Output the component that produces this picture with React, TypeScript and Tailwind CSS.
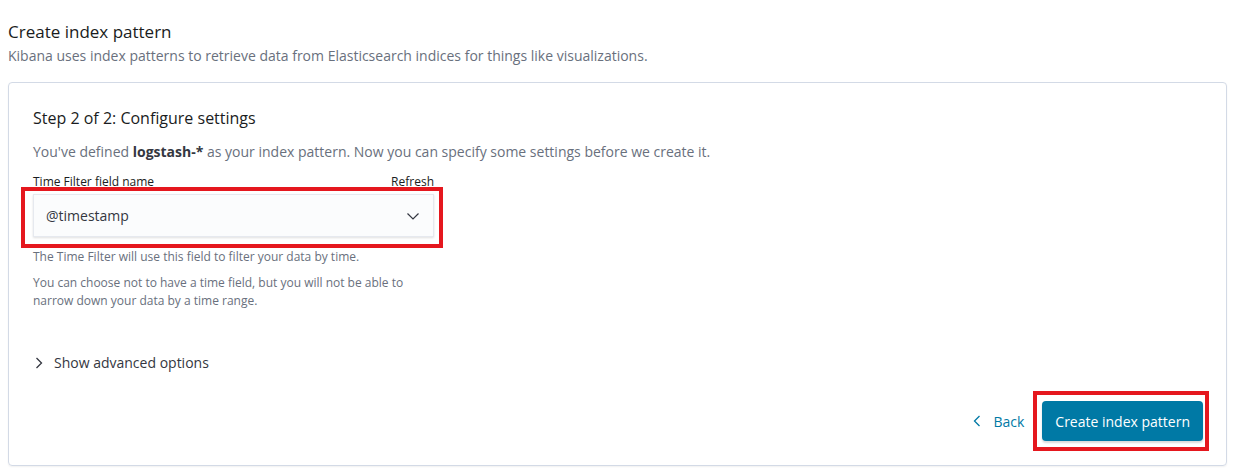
const ChevronDown = () => (
  <svg width="16" height="16" viewBox="0 0 16 16" fill="none" stroke="#343741" strokeWidth="1.2">
    <path d="M2.5 5.5 8 11l5.5-5.5" />
  </svg>
);

const ChevronRight = ({ color = "#343741" }: { color?: string }) => (
  <svg width="12" height="14" viewBox="0 0 12 14" fill="none" stroke={color} strokeWidth="1.3">
    <path d="M3.5 2 8.5 7l-5 5" />
  </svg>
);

const ChevronLeft = () => (
  <svg width="12" height="14" viewBox="0 0 12 14" fill="none" stroke="#0079a5" strokeWidth="1.3">
    <path d="M8.5 2 3.5 7l5 5" />
  </svg>
);

const App = () => {
  return (
    <div
      className="w-[1234px] h-[472px] bg-white overflow-hidden px-2 pt-[20px] text-[#343741]"
      style={{ fontFamily: "'Open Sans', 'Liberation Sans', sans-serif" }}
    >
      {/* header */}
      <h1 className="text-[17px] leading-[24px] text-[#1a1c21]">Create index pattern</h1>
      <p className="text-[14px] leading-[20px] text-[#69707d] mt-[2px]">
        Kibana uses index patterns to retrieve data from Elasticsearch indices for things like visualizations.
      </p>

      {/* panel */}
      <div className="mt-[16px] w-[1219px] h-[384px] border border-[#d3dae6] rounded-[4px] shadow-[0_1px_2px_rgba(0,0,0,0.06)] px-6 pt-[23px] flex flex-col">
        <h2 className="text-[16px] leading-[24px] text-[#1a1c21]">Step 2 of 2: Configure settings</h2>
        <p className="mt-[12px] text-[14px] leading-[20px] text-[#69707d]">
          You've defined <strong className="font-bold text-[#343741]">logstash-*</strong> as your index pattern. Now you can specify some settings before we create it.
        </p>

        <div className="mt-[12px] w-[401px]">
          <div className="flex justify-between text-[12px] leading-[16px] text-[#1a1c21]">
            <span>Time Filter field name</span>
            <span>Refresh</span>
          </div>
          <div className="relative mt-[4px]">
            <div className="h-[43px] bg-[#fbfcfd] border border-[#e6e9ef] shadow-[0_1px_2px_rgba(0,0,0,0.12)] flex items-center justify-between pl-3 pr-3 text-[14px] text-[#343741]">
              <span>@timestamp</span>
              <ChevronDown />
            </div>
            <div className="absolute -left-[12px] -right-[9px] -top-[7px] -bottom-[11px] border-[4px] border-[#e5171e] pointer-events-none" />
          </div>
          <p className="mt-[11px] text-[12px] leading-[18px] text-[#69707d]">
            The Time Filter will use this field to filter your data by time.
          </p>
          <p className="mt-[8px] text-[12px] leading-[18px] text-[#69707d]">
            You can choose not to have a time field, but you will not be able to narrow down your data by a time range.
          </p>
        </div>

        <div className="mt-[43px] flex items-center gap-[9px] text-[14px] leading-[20px] text-[#343741]">
          <ChevronRight />
          <span>Show advanced options</span>
        </div>

        <div className="mt-[28px] flex justify-end items-center -mr-[1px]">
          <button className="flex items-center gap-[10px] px-3 h-[40px] text-[14px] text-[#0079a5]">
            <ChevronLeft />
            <span>Back</span>
          </button>
          <div className="relative ml-[6px]">
            <button className="h-[40px] px-[13px] rounded-[4px] bg-[#0079a5] text-white text-[14px] shadow-[0_2px_2px_rgba(0,0,0,0.15)]">
              Create index pattern
            </button>
            <div className="absolute -left-[9px] -right-[6px] -top-[10px] -bottom-[10px] border-[4px] border-[#e5171e] pointer-events-none" />
          </div>
        </div>
      </div>
    </div>
  );
};

export default App;
